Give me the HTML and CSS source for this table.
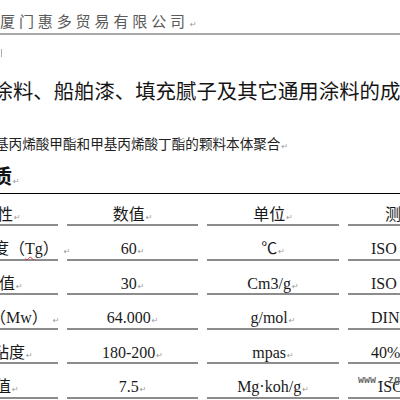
FILE: index.html
```html
<!DOCTYPE html>
<html lang="zh-CN">
<head>
<meta charset="utf-8">
<title>产品资料</title>
<link rel="stylesheet" href="styles.css">
</head>
<body>
<div class="page">
  <div class="company">厦门惠多贸易有限公司<span class="pm">↵</span></div>
  <div class="corner"></div>
  <h1 class="title">涂料、船舶漆、填充腻子及其它通用涂料的成膜物</h1>
  <p class="desc">基丙烯酸甲酯和甲基丙烯酸丁酯的颗料本体聚合<span class="pm">↵</span></p>
  <h2 class="sub">质<span class="pm">↵</span></h2>
  <div class="table">
    <div class="cell c1 head"><span class="in3">性</span><span class="pm">↵</span></div>
    <div class="cell head">数值<span class="pm">↵</span></div>
    <div class="cell head">单位<span class="pm">↵</span></div>
    <div class="cell c4 head">测试方法<span class="pm">↵</span></div>

    <div class="cell c1"><span class="in7">度</span>（<span class="sp">Tg</span>） <span class="pm">↵</span></div>
    <div class="cell">60<span class="pm">↵</span></div>
    <div class="cell">℃<span class="pm">↵</span></div>
    <div class="cell c4">ISO 11357-2<span class="pm">↵</span></div>

    <div class="cell c1"><span class="in1">值</span><span class="pm">↵</span></div>
    <div class="cell">30<span class="pm">↵</span></div>
    <div class="cell">Cm3/g<span class="pm">↵</span></div>
    <div class="cell c4">ISO 2114-1<span class="pm">↵</span></div>

    <div class="cell c1"><span class="in10">（</span>Mw） <span class="pm">↵</span></div>
    <div class="cell">64.000<span class="pm">↵</span></div>
    <div class="cell">g/mol<span class="pm">↵</span></div>
    <div class="cell c4">DIN-55672<span class="pm">↵</span></div>

    <div class="cell c1"><span class="in7">粘</span>度<span class="pm">↵</span></div>
    <div class="cell">180-200<span class="pm">↵</span></div>
    <div class="cell">mpas<span class="pm">↵</span></div>
    <div class="cell c4">40% BuAc<span class="pm">↵</span></div>

    <div class="cell c1"><span class="in5">值</span><span class="pm">↵</span></div>
    <div class="cell">7.5<span class="pm">↵</span></div>
    <div class="cell">Mg·koh/g<span class="pm">↵</span></div>
    <div class="cell c4 last">ISO 2114<span class="pm">↵</span></div>
  </div>
  <div class="watermark">www. zgxcw.com</div>
</div>
</body>
</html>
```

FILE: styles.css
```css
html, body {
  margin: 0;
  padding: 0;
  background: #fff;
}

.page {
  position: relative;
  width: 400px;
  height: 400px;
  overflow: hidden;
  background: #fff;
  color: #111;
  font-family: "Liberation Serif", "Noto Sans CJK SC", serif;
}

.pm {
  font-family: "DejaVu Sans", sans-serif;
  font-size: 8px;
  line-height: 0;
  color: #999;
  margin-left: 1px;
  font-weight: normal;
  letter-spacing: 0;
}

.company {
  margin-top: 9px;
  height: 24px;
  line-height: 24px;
  font-family: "Noto Sans CJK SC", sans-serif;
  font-size: 15px;
  letter-spacing: 3.9px;
  color: #5a5a5a;
  white-space: nowrap;
  border-bottom: 2px solid #a8a8a8;
}

.corner {
  margin-top: 14px;
  margin-left: 1px;
  width: 1px;
  height: 8px;
  background: #b0b0b0;
}

.title {
  margin: 19px 0 0 0;
  line-height: 28px;
  font-family: "Noto Sans CJK SC", sans-serif;
  font-weight: 400;
  font-size: 20.4px;
  color: #151515;
  white-space: nowrap;
  text-indent: -7.5px;
}

.desc {
  margin: 29px 0 0 0;
  line-height: 20px;
  font-family: "Noto Sans CJK SC", sans-serif;
  font-size: 13.6px;
  color: #222;
  white-space: nowrap;
  text-indent: -5px;
}

.sub {
  margin: 10px 0 0 0;
  line-height: 26px;
  font-family: "Noto Sans CJK SC", sans-serif;
  font-weight: 700;
  font-size: 20px;
  color: #111;
  white-space: nowrap;
  text-indent: -8px;
}

.table {
  margin-top: 4px;
  margin-left: -70px;
  width: max-content;
  display: grid;
  grid-template-columns: 128px 131px 132px 131px;
  column-gap: 9px;
  border-top: 1.5px solid #000;
}

.cell {
  box-sizing: border-box;
  height: 34.5px;
  padding-top: 14px;
  line-height: 18px;
  font-size: 16px;
  color: #1a1a1a;
  text-align: center;
  white-space: nowrap;
  border-bottom: 2px solid #8c8c8c;
}

.cell.head {
  height: 32px;
  padding-top: 12px;
}

.c1 {
  text-align: left;
  padding-left: 70px;
}

.c4 {
  text-align: left;
  padding-left: 23px;
}

.c4.head {
  padding-left: 37px;
}

.c4.last {
  padding-left: 30px;
}

.in1 { margin-left: -1px; }
.in3 { margin-left: -3px; }
.in5 { margin-left: -5px; }
.in7 { margin-left: -7px; }
.in10 { margin-left: -10px; }

.sp {
  text-decoration: underline wavy #e03030;
  text-decoration-thickness: 1px;
  text-underline-offset: 2px;
}

.watermark {
  position: absolute;
  left: 358px;
  top: 375px;
  font-family: "Liberation Mono", monospace;
  font-size: 10px;
  line-height: 12px;
  font-weight: bold;
  color: #666;
  white-space: nowrap;
}
```
